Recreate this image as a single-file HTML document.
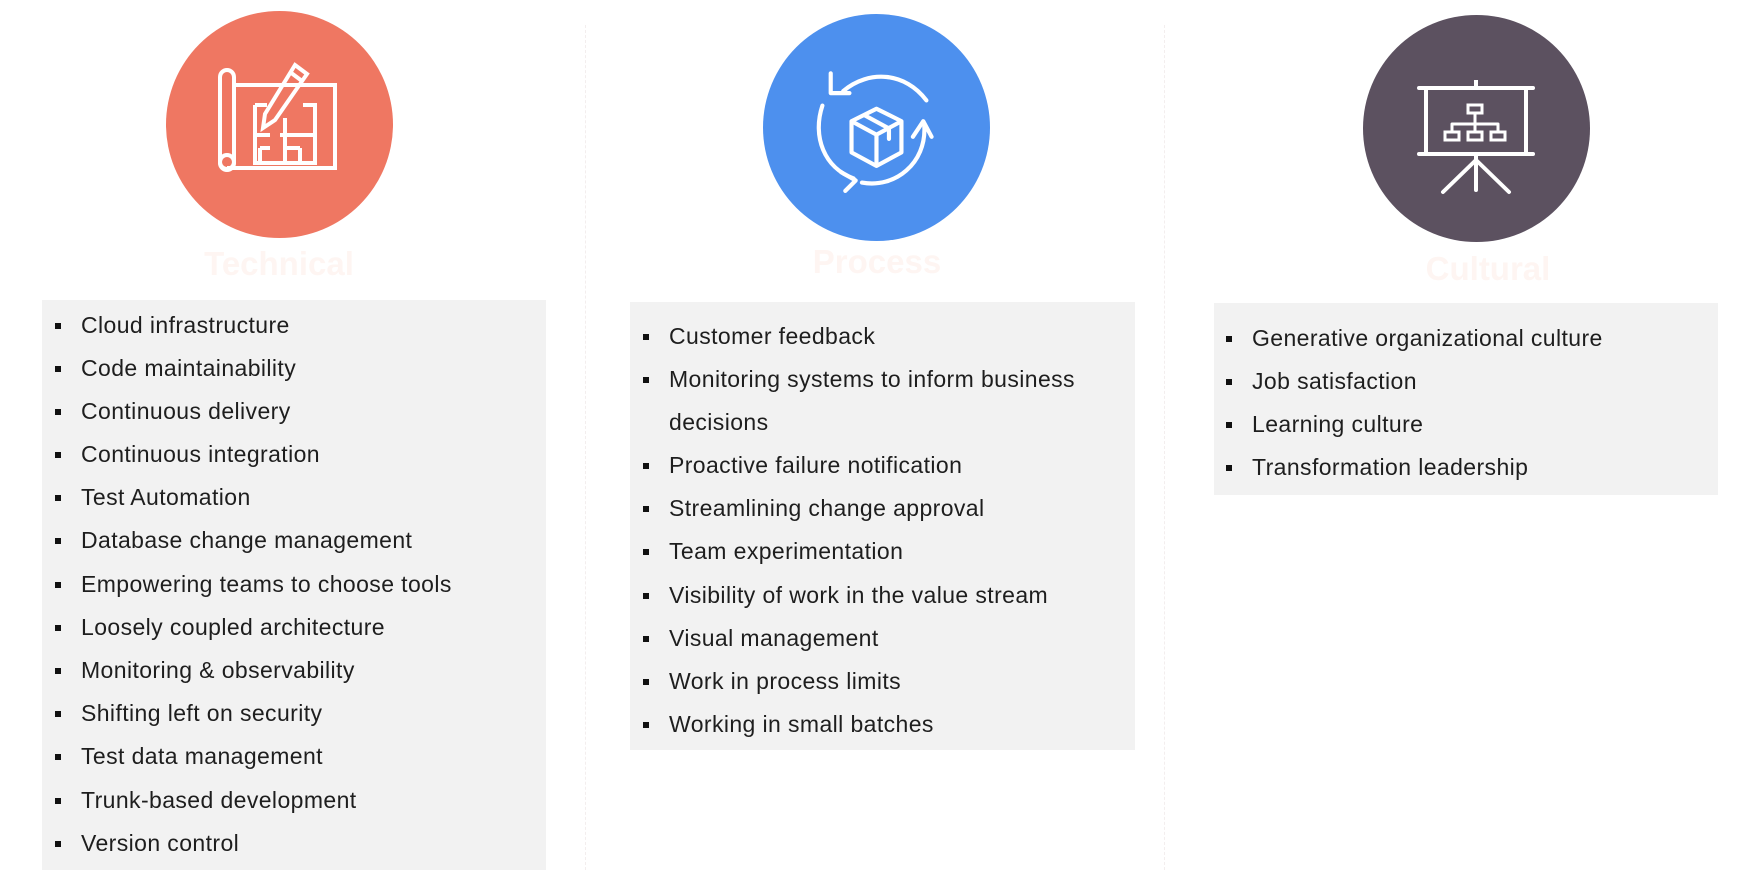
<!DOCTYPE html>
<html><head><meta charset="utf-8"><style>
html,body{margin:0;padding:0;background:#fff;width:1740px;height:870px;overflow:hidden;font-family:"Liberation Sans",sans-serif;}
.c{position:absolute;border-radius:50%;width:227px;height:227px;}
.t{position:absolute;font-weight:bold;font-size:33px;color:#fef5f2;text-align:center;width:400px;}
.box{position:absolute;background:#f2f2f2;}
ul{list-style:none;margin:0;padding:0;}
li{position:absolute;left:0;font-size:23px;letter-spacing:0.4px;color:#1e1e1e;white-space:nowrap;line-height:43px;}
li.b::before{content:"";position:absolute;left:-26px;top:19px;width:6px;height:6px;background:#111;}
.dash{position:absolute;top:25px;bottom:0;border-left:1px dashed #f3eeee;}
svg{position:absolute;}
</style></head><body>
<div class="dash" style="left:585px"></div>
<div class="dash" style="left:1164px"></div>

<div class="c" style="left:166px;top:11px;background:#ef7762"></div>
<svg style="left:215px;top:60px" width="130" height="130" viewBox="0 0 130 130" fill="none" stroke="#fff" stroke-width="4">
<rect x="5" y="10" width="14" height="100" rx="7"/>
<path d="M19 25 H120 V108 H12"/>
<circle cx="12" cy="102" r="7"/>
<path d="M80 5 L92 14 L60 60 L48 68 L50 54 Z M75 12 L87 21"/>
<path d="M40 45 H52 M40 45 V103 H100 V45 H88 M40 75 H55 M65 75 H100 M45 88 V103 M70 58 V103 M70 88 H85 M85 88 V103 M55 88 H45"/>
</svg>
<div class="t" style="left:79px;top:245px">Technical</div>

<div class="c" style="left:763px;top:14px;background:#4d90ee"></div>
<svg style="left:812px;top:64px" width="130" height="130" viewBox="0 0 125 125" fill="none" stroke="#fff" stroke-width="4" stroke-linecap="round" stroke-linejoin="round">
<path d="M30 26 C55 5 90 8 110 35"/>
<path d="M18 9 V28 H36"/>
<path d="M10 40 C0 70 12 100 40 110"/>
<path d="M28 104 L42 112 L32 122"/>
<path d="M48 114 C80 120 110 95 108 60"/>
<path d="M97 70 L107 55 L115 70"/>
<path d="M38 55 L62 43 L86 55 L86 85 L62 98 L38 85 Z M38 55 L62 68 L86 55 M62 68 V98 M50 49 L74 62 V72"/>
</svg>
<div class="t" style="left:677px;top:243px">Process</div>

<div class="c" style="left:1363px;top:15px;background:#5c5160"></div>
<svg style="left:1416px;top:80px" width="120" height="120" viewBox="0 0 120 120" fill="none" stroke="#fff" stroke-width="4" stroke-linecap="round">
<path d="M3 8 H117 M10 8 V74 M110 8 V74 M3 74 H117 M60 0 V8 M60 74 V110 M60 80 L27 112 M60 80 L93 112"/>
<rect x="52" y="25" width="14" height="8" stroke-width="3"/>
<path d="M59 33 V44 M36 44 H82 M36 44 V52 M59 44 V52 M82 44 V52" stroke-width="3"/>
<rect x="29" y="52" width="14" height="8" stroke-width="3"/>
<rect x="52" y="52" width="14" height="8" stroke-width="3"/>
<rect x="75" y="52" width="14" height="8" stroke-width="3"/>
</svg>
<div class="t" style="left:1288px;top:250px">Cultural</div>

<div class="box" style="left:42px;top:300px;width:504px;height:570px">
<ul style="position:absolute;left:39px;top:4px">
<li class="b" style="top:0">Cloud infrastructure</li>
<li class="b" style="top:43px">Code maintainability</li>
<li class="b" style="top:86px">Continuous delivery</li>
<li class="b" style="top:129px">Continuous integration</li>
<li class="b" style="top:172px">Test Automation</li>
<li class="b" style="top:215px">Database change management</li>
<li class="b" style="top:259px">Empowering teams to choose tools</li>
<li class="b" style="top:302px">Loosely coupled architecture</li>
<li class="b" style="top:345px">Monitoring &amp; observability</li>
<li class="b" style="top:388px">Shifting left on security</li>
<li class="b" style="top:431px">Test data management</li>
<li class="b" style="top:475px">Trunk-based development</li>
<li class="b" style="top:518px">Version control</li>
</ul></div>

<div class="box" style="left:630px;top:302px;width:505px;height:448px">
<ul style="position:absolute;left:39px;top:13px">
<li class="b" style="top:0">Customer feedback</li>
<li class="b" style="top:43px">Monitoring systems to inform business</li>
<li style="top:86px">decisions</li>
<li class="b" style="top:129px">Proactive failure notification</li>
<li class="b" style="top:172px">Streamlining change approval</li>
<li class="b" style="top:215px">Team experimentation</li>
<li class="b" style="top:259px">Visibility of work in the value stream</li>
<li class="b" style="top:302px">Visual management</li>
<li class="b" style="top:345px">Work in process limits</li>
<li class="b" style="top:388px">Working in small batches</li>
</ul></div>

<div class="box" style="left:1214px;top:303px;width:504px;height:192px">
<ul style="position:absolute;left:38px;top:14px">
<li class="b" style="top:0">Generative organizational culture</li>
<li class="b" style="top:43px">Job satisfaction</li>
<li class="b" style="top:86px">Learning culture</li>
<li class="b" style="top:129px">Transformation leadership</li>
</ul></div>
</body></html>
